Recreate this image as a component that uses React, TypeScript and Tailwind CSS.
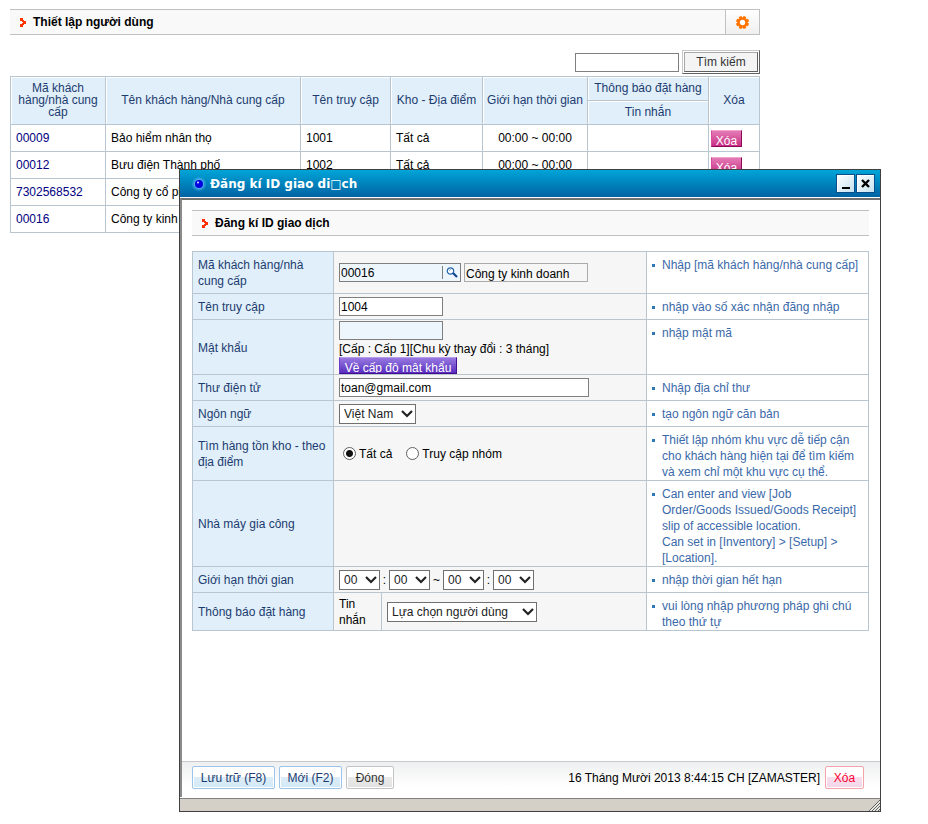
import React from "react";

const FONT = "font-['Liberation_Sans',Arial,sans-serif]";

function Arrow() {
  return (
    <svg width="6" height="9" viewBox="0 0 6 9" shapeRendering="crispEdges" fill="#ff3300" className="shrink-0" aria-hidden="true">
      <rect x="0" y="0" width="3" height="3" />
      <rect x="3" y="3" width="3" height="3" />
      <rect x="2" y="2" width="2" height="2" />
      <rect x="2" y="5" width="2" height="2" />
      <rect x="0" y="6" width="3" height="3" />
    </svg>
  );
}

function Gear() {
  return (
    <svg width="13" height="13" viewBox="0 0 13 13" aria-hidden="true">
      <g fill="#ff7400">
        {[22, 68, 112, 158].map((a) => (
          <rect key={a} x="5" y="0" width="3" height="13" transform={`rotate(${a} 6.5 6.5)`} />
        ))}
      </g>
      <circle cx="6.5" cy="6.5" r="4" fill="#fff" stroke="#ff7400" strokeWidth="2.6" />
    </svg>
  );
}

function SectionTitle({ children, action }: { children: React.ReactNode; action?: React.ReactNode }) {
  return (
    <div className="flex h-[26px] items-stretch border-y border-[#c0c0c0] bg-[#f9f9f9]">
      <h2 className="flex flex-1 items-center gap-[7px] pl-[10px] text-[12px] font-bold text-black">
        <Arrow />
        {children}
      </h2>
      {action}
    </div>
  );
}

const rows = [
  { code: "00009", name: "Bảo hiểm nhân thọ", login: "1001" },
  { code: "00012", name: "Bưu điện Thành phố", login: "1002" },
  { code: "7302568532", name: "Công ty cổ phần", login: "1003" },
  { code: "00016", name: "Công ty kinh doanh", login: "1004" },
];

const HEAD =
  "border border-[#b9c5cf] bg-[#e1effa] px-px pb-[2px] text-center font-normal leading-[12px] text-[#1c3c70] shadow-[inset_1px_1px_0_#fff]";
const CELL = "h-[27px] border border-[#b9c5cf] px-[5px]";

function UserTable() {
  return (
    <table className="w-full table-fixed border-collapse text-[12px] leading-[14px]">
      <colgroup>
        <col className="w-[95px]" />
        <col />
        <col className="w-[90px]" />
        <col className="w-[92px]" />
        <col className="w-[105px]" />
        <col className="w-[121px]" />
        <col className="w-[51px]" />
      </colgroup>
      <thead>
        <tr className="h-[24px]">
          <th rowSpan={2} className={HEAD}>Mã khách hàng/nhà cung cấp</th>
          <th rowSpan={2} className={HEAD}>Tên khách hàng/Nhà cung cấp</th>
          <th rowSpan={2} className={HEAD}>Tên truy cập</th>
          <th rowSpan={2} className={HEAD}>Kho - Địa điểm</th>
          <th rowSpan={2} className={HEAD}>Giới hạn thời gian</th>
          <th className={HEAD}>Thông báo đặt hàng</th>
          <th rowSpan={2} className={HEAD}>Xóa</th>
        </tr>
        <tr className="h-[24px]">
          <th className={HEAD}>Tin nhắn</th>
        </tr>
      </thead>
      <tbody>
        {rows.map((r) => (
          <tr key={r.code}>
            <td className={CELL}>
              <a href="#" className="text-[#000080]">{r.code}</a>
            </td>
            <td className={CELL}>{r.name}</td>
            <td className={CELL}>{r.login}</td>
            <td className={CELL}>Tất cả</td>
            <td className={`${CELL} text-center`}>00:00 ~ 00:00</td>
            <td className={CELL}></td>
            <td className="h-[27px] border border-[#b9c5cf] pl-[2px]">
              <button className="block h-[17px] w-[31px] overflow-hidden border border-t-[#f3a3d0] border-r-[#8a0a58] border-b-[#8a0a58] border-l-[#d64c9c] bg-linear-to-b from-[#e27ab5] to-[#c92a86] pt-[3px] text-center leading-[14px] text-white">
                Xóa
              </button>
            </td>
          </tr>
        ))}
      </tbody>
    </table>
  );
}

function Select({ id, label, value, size }: { id: string; label?: string; value: string; size: string }) {
  return (
    <span className={`relative inline-block ${size}`}>
      <select
        id={id}
        aria-label={label}
        className="block h-[20px] w-full appearance-none border border-[#707070] bg-white pl-[4px] leading-[18px] text-[#222]"
      >
        <option>{value}</option>
      </select>
      <svg
        className="pointer-events-none absolute top-[6px] right-[3px]"
        width="12"
        height="8"
        viewBox="0 0 12 8"
        fill="none"
        stroke="#222"
        strokeWidth="2.2"
        aria-hidden="true"
      >
        <path d="M1 1l5 5 5-5" />
      </svg>
    </span>
  );
}

function Row({
  label,
  htmlFor,
  height,
  hint,
  children,
}: {
  label: string;
  htmlFor?: string;
  height: string;
  hint: React.ReactNode;
  children?: React.ReactNode;
}) {
  return (
    <tr className={height}>
      <th scope="row" className="border border-[#b9c5cf] bg-[#e1effa] px-[5px] pt-px text-left font-normal text-[#1c3c70]">
        <label htmlFor={htmlFor}>{label}</label>
      </th>
      {children}
      <td className="border border-[#b9c5cf] bg-white pt-[5px] pr-[5px] pl-[5px] align-top text-[#3a69a9]">
        <div className="flex items-start gap-[7px]">
          <span className="mt-[7px] size-[3px] shrink-0 bg-[#2a78b8]"></span>
          <p className="min-w-0">{hint}</p>
        </div>
      </td>
    </tr>
  );
}

function Field({ children }: { children?: React.ReactNode }) {
  return (
    <td colSpan={2} className="border border-[#b9c5cf] bg-[#f6f6f6] px-[5px]">
      {children}
    </td>
  );
}

const INPUT = "block h-[19px] border border-[#7f7f7f] px-px pt-px text-black outline-none";
const RADIO =
  "size-[13px] appearance-none rounded-full border border-[#606060] bg-white checked:bg-[radial-gradient(circle,#111_3px,transparent_4px)]";

function RegisterForm() {
  return (
    <table className="w-full table-fixed border-collapse text-[12px] leading-[16px]">
      <colgroup>
        <col className="w-[141px]" />
        <col className="w-[48px]" />
        <col />
        <col className="w-[222px]" />
      </colgroup>
      <tbody>
        <Row label="Mã khách hàng/nhà cung cấp" htmlFor="code" height="h-[42px]" hint="Nhập [mã khách hàng/nhà cung cấp]">
          <Field>
            <div className="flex gap-[3px]">
              <div className="flex h-[19px] w-[122px] items-center border border-[#7f7f7f] bg-[#edf5fd]">
                <input id="code" defaultValue="00016" className="min-w-0 flex-1 px-px pt-px outline-none" />
                <button aria-label="Tìm" className="flex h-[13px] w-[18px] items-center justify-center border-l border-[#7f7f7f]">
                  <svg width="12" height="11" viewBox="0 0 12 11" fill="none" aria-hidden="true">
                    <circle cx="4.5" cy="4" r="3.2" fill="#fff" stroke="#2668b0" strokeWidth="1.2" />
                    <path d="M3 4l2-2" stroke="#8fb8e0" />
                    <path d="M7 6l4 4" stroke="#0b4593" strokeWidth="2.2" />
                  </svg>
                </button>
              </div>
              <input aria-label="Tên" readOnly defaultValue="Công ty kinh doanh" className="block h-[19px] w-[124px] border border-[#ababab] bg-[#f6f6f6] px-px pt-[2px] leading-[15px] outline-none" />
            </div>
          </Field>
        </Row>
        <Row label="Tên truy cập" htmlFor="login" height="h-[26px]" hint="nhập vào số xác nhận đăng nhập">
          <Field>
            <input id="login" defaultValue="1004" className={`${INPUT} w-[104px] bg-white`} />
          </Field>
        </Row>
        <Row label="Mật khẩu" htmlFor="pass" height="h-[55px]" hint="nhập mật mã">
          <Field>
            <input id="pass" type="password" className={`${INPUT} w-[104px] bg-[#edf5fd]`} />
            <p className="pt-px">[Cấp : Cấp 1][Chu kỳ thay đổi : 3 tháng]</p>
            <button className="block h-[17px] w-[118px] overflow-hidden border border-t-[#b79bea] border-r-[#42108f] border-b-[#42108f] border-l-[#6a3cc4] bg-linear-to-b from-[#9878e0] to-[#5b2bbf] pt-[3px] text-center leading-[14px] text-white">
              Về cấp độ mật khẩu
            </button>
          </Field>
        </Row>
        <Row label="Thư điện tử" htmlFor="mail" height="h-[26px]" hint="Nhập địa chỉ thư">
          <Field>
            <input id="mail" defaultValue="toan@gmail.com" className={`${INPUT} w-[250px] bg-white`} />
          </Field>
        </Row>
        <Row label="Ngôn ngữ" htmlFor="lang" height="h-[26px]" hint="tạo ngôn ngữ căn bản">
          <Field>
            <div className="flex">
              <Select id="lang" value="Việt Nam" size="w-[77px]" />
            </div>
          </Field>
        </Row>
        <Row
          label="Tìm hàng tồn kho - theo địa điểm"
          height="h-[54px]"
          hint="Thiết lập nhóm khu vực dễ tiếp cận cho khách hàng hiện tại để tìm kiếm và xem chỉ một khu vực cụ thể."
        >
          <Field>
            <div className="flex gap-[14px] pl-[4px]">
              <label className="flex items-center gap-[3px]">
                <input type="radio" name="scope" defaultChecked className={RADIO} />
                Tất cả
              </label>
              <label className="flex items-center gap-[3px]">
                <input type="radio" name="scope" className={RADIO} />
                Truy cập nhóm
              </label>
            </div>
          </Field>
        </Row>
        <Row
          label="Nhà máy gia công"
          height="h-[86px]"
          hint={
            <>
              Can enter and view [Job
              <br />
              Order/Goods Issued/Goods Receipt] slip of accessible location.
              <br />
              Can set in [Inventory] &gt; [Setup] &gt; [Location].
            </>
          }
        >
          <Field />
        </Row>
        <Row label="Giới hạn thời gian" htmlFor="h1" height="h-[26px]" hint="nhập thời gian hết hạn">
          <Field>
            <div className="flex items-center">
              <Select id="h1" value="00" size="w-[41px]" />
              <span className="w-[9px] text-center">:</span>
              <Select id="m1" label="Phút bắt đầu" value="00" size="w-[41px]" />
              <span className="w-[13px] text-center">~</span>
              <Select id="h2" label="Giờ kết thúc" value="00" size="w-[41px]" />
              <span className="w-[9px] text-center">:</span>
              <Select id="m2" label="Phút kết thúc" value="00" size="w-[41px]" />
            </div>
          </Field>
        </Row>
        <Row
          label="Thông báo đặt hàng"
          htmlFor="notice"
          height="h-[38px]"
          hint="vui lòng nhập phương pháp ghi chú theo thứ tự"
        >
          <td className="border border-[#b9c5cf] bg-[#f6f6f6] px-[5px] pt-px">Tin nhắn</td>
          <td className="border border-[#b9c5cf] bg-[#f6f6f6] px-[5px]">
            <div className="flex">
              <Select id="notice" value="Lựa chọn người dùng" size="w-[150px]" />
            </div>
          </td>
        </Row>
      </tbody>
    </table>
  );
}

const WINBTN =
  "flex size-[19px] justify-center border border-[#0a4f8c] bg-linear-to-br from-white to-[#c6e2f0] shadow-[inset_1px_1px_0_#fff]";
const BLUEBTN =
  "h-[23px] rounded-[2px] border border-[#9cc4ea] bg-[linear-gradient(#fff_50%,#dcedf8_50%,#d3e9f7)] text-[#1c3c70] shadow-[inset_0_0_0_1px_#fff]";

function RegisterWindow() {
  return (
    <section
      role="dialog"
      aria-label="Đăng kí ID giao dịch"
      className="absolute top-[169px] left-[179px] flex h-[643px] w-[702px] flex-col border border-[#404040] bg-white"
    >
      <header className="flex h-[27px] shrink-0 items-center bg-linear-to-b from-[#00a5d8] to-[#0063a3] pr-[5px] pl-[11px]">
        <svg width="16" height="16" viewBox="0 0 16 16" aria-hidden="true">
          <circle cx="8" cy="8" r="7" fill="#4fb4f0" opacity=".35" />
          <circle cx="8" cy="8" r="5.4" fill="#6fc4ff" opacity=".5" />
          <circle cx="8" cy="8" r="4" fill="#0000e0" />
          <circle cx="7" cy="6.5" r="1" fill="#dfe8ff" />
        </svg>
        <h1 className="flex-1 pl-[3px] font-['DejaVu_Sans',Verdana,sans-serif] text-[12px] font-bold text-white">
          Đăng kí ID giao di□ch
        </h1>
        <div className="flex gap-px">
          <button aria-label="Thu nhỏ" className={`${WINBTN} items-end pb-[3px]`}>
            <span className="h-[2px] w-[8px] bg-black"></span>
          </button>
          <button aria-label="Đóng cửa sổ" className={`${WINBTN} items-center`}>
            <svg width="9" height="9" viewBox="0 0 9 9" stroke="#000" strokeWidth="2.4" aria-hidden="true">
              <path d="M1 1l7 7M8 1l-7 7" />
            </svg>
          </button>
        </div>
      </header>
      <div className="mt-px flex flex-1 flex-col border-t-2 border-l-2 border-t-[#707070] border-l-[#8a8a8a]">
        <main className="flex-1 pt-[10px] pr-[11px] pl-[10px]">
          <SectionTitle>Đăng kí ID giao dịch</SectionTitle>
          <div className="mt-[15px]">
            <RegisterForm />
          </div>
        </main>
        <footer className="flex h-[36px] items-start gap-[4px] border-t border-[#c8c8c8] bg-linear-to-b from-[#eeeff0] to-white to-70% pt-[4px] pr-[16px] pl-[10px] text-[12px]">
          <button className={`${BLUEBTN} w-[83px]`}>Lưu trữ (F8)</button>
          <button className={`${BLUEBTN} w-[63px]`}>Mới (F2)</button>
          <button className="h-[23px] w-[48px] rounded-[2px] border border-[#c4c4c4] bg-[linear-gradient(#fff_50%,#e9e9e9_50%,#e2e2e2)] text-[#333] shadow-[inset_0_0_0_1px_#fff]">
            Đóng
          </button>
          <p className="ml-auto pt-[4px] pr-px leading-[16px]">16 Tháng Mười 2013 8:44:15 CH [ZAMASTER]</p>
          <button className="h-[23px] w-[39px] rounded-[2px] border border-[#f5a3a8] bg-[linear-gradient(#fff_50%,#f8dfee_50%,#f3d6e9)] text-[#ff0033] shadow-[inset_0_0_0_1px_#fff]">
            Xóa
          </button>
        </footer>
      </div>
      <div className="mt-px flex h-[13px] shrink-0 items-end justify-end border-t border-[#808080] bg-[#d4d0c8]">
        <svg width="12" height="12" viewBox="0 0 12 12" stroke="#606060" aria-hidden="true">
          <path d="M1 12L12 1M4 12l8-8M7 12l5-5M10 12l2-2" />
          <path d="M2 12.5L12.5 2M5 12.5L12.5 5M8 12.5L12.5 8" stroke="#fff" />
        </svg>
      </div>
    </section>
  );
}

export default function App() {
  return (
    <div className={`relative min-h-screen bg-white px-[10px] pt-[9px] text-[12px] text-black ${FONT}`}>
      <div className="w-full max-w-[750px]">
        <SectionTitle
          action={
            <button
              aria-label="Cài đặt"
              className="flex w-[35px] items-center justify-center border-x border-[#c0c0c0] bg-linear-to-b from-white to-[#efefef]"
            >
              <Gear />
            </button>
          }
        >
          Thiết lập người dùng
        </SectionTitle>
        <form className="mt-[15px] flex items-center justify-end gap-[3px]" onSubmit={(e) => e.preventDefault()}>
          <input aria-label="Từ khóa" className="h-[19px] w-[104px] border border-[#7f7f7f] bg-white px-px" />
          <button className="h-[24px] w-[78px] border border-t-[#c8c8c8] border-r-[#606060] border-b-[#606060] border-l-[#c8c8c8] bg-white p-px">
            <span className="block h-full border border-t-[#a8a8a8] border-r-[#606060] border-b-[#606060] border-l-[#a8a8a8] bg-[#f4f4f4] leading-[18px] text-[#333]">
              Tìm kiếm
            </span>
          </button>
        </form>
        <div className="mt-[2px]">
          <UserTable />
        </div>
      </div>
      <RegisterWindow />
    </div>
  );
}
